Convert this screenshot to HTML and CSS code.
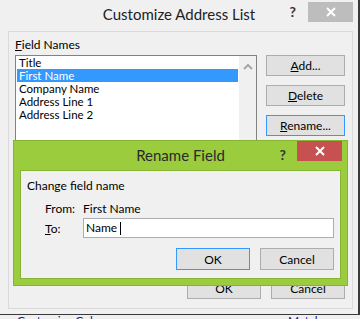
FILE: index.html
```html
<!DOCTYPE html>
<html lang="en">
<head>
  <meta charset="UTF-8">
  <meta name="viewport" content="width=device-width, initial-scale=1.0">
  <title>Customize Address List</title>
  <link rel="stylesheet" href="styles.css">
</head>
<body>
  <div class="window">
    <div class="titlebar">
      <div></div>
      <div class="title">Customize Address List</div>
      <div class="controls">
        <span class="help">?</span>
        <span class="close close-gray">
          <svg width="10" height="10" viewBox="0 0 10 10"><path d="M1 1L9 9M9 1L1 9" stroke="#fff" stroke-width="2"/></svg>
        </span>
      </div>
    </div>

    <div class="panel">
      <div class="label"><u>F</u>ield Names</div>
      <div class="panel-row">
        <div class="listbox">
          <ul class="items">
            <li>Title</li>
            <li class="selected">First Name</li>
            <li>Company Name</li>
            <li>Address Line 1</li>
            <li>Address Line 2</li>
          </ul>
          <div class="scrollbar">
            <svg width="10" height="6" viewBox="0 0 10 6"><path d="M1 5L5 1L9 5" fill="none" stroke="#a6a6a6" stroke-width="2"/></svg>
          </div>
        </div>
        <div class="side-buttons">
          <button class="btn"><u>A</u>dd...</button>
          <button class="btn"><u>D</u>elete</button>
          <button class="btn btn-focus"><u>R</u>ename...</button>
        </div>
      </div>
      <div class="bottom-buttons">
        <button class="btn btn-small">OK</button>
        <button class="btn btn-small">Cancel</button>
      </div>
    </div>

    <div class="rename-dialog">
      <div class="rename-titlebar">
        <div></div>
        <div class="rename-title">Rename Field</div>
        <div class="controls">
          <span class="help help-dark">?</span>
          <span class="close close-red">
            <svg width="10" height="10" viewBox="0 0 10 10"><path d="M1 1L9 9M9 1L1 9" stroke="#fff" stroke-width="2"/></svg>
          </span>
        </div>
      </div>
      <div class="rename-body">
        <div class="rename-heading">Change field name</div>
        <div class="rename-form">
          <span class="form-label">From:</span>
          <span class="form-value">First Name</span>
          <span class="form-label"><u>T</u>o:</span>
          <div class="text-field">Name<span class="caret"></span></div>
        </div>
        <div class="rename-buttons">
          <button class="btn btn-small btn-focus">OK</button>
          <button class="btn btn-small">Cancel</button>
        </div>
      </div>
    </div>
  </div>
  <div class="strip">
    <span>Customize Columns...</span>
    <span class="strip-right">Match...</span>
  </div>
</body>
</html>
```

FILE: styles.css
```css
body {
  margin: 0;
  width: 360px;
  height: 319px;
  overflow: hidden;
  background: #f0f0f0;
  font-family: Lato, 'Liberation Sans', sans-serif;
  font-size: 12px;
  color: #000;
}
.window {
  position: relative;
  width: 358px;
  height: 314px;
  border-right: 2px solid #3a3a3a;
  border-bottom: 1px solid #3a3a3a;
  background: #f0f0f0;
  box-sizing: content-box;
}
.titlebar {
  display: grid;
  grid-template-columns: 1fr auto 1fr;
  height: 31px;
}
.title {
  font-size: 15px;
  color: #222;
  line-height: 28px;
}
.controls {
  display: flex;
  justify-content: flex-end;
  align-items: flex-start;
}
.help {
  font-weight: bold;
  font-size: 14px;
  color: #333;
  margin-top: 3px;
  margin-right: 12px;
}
.close {
  display: flex;
  align-items: center;
  justify-content: center;
  width: 45px;
  height: 20px;
}
.close-gray {
  background: #bdbdbd;
  margin-top: 2px;
  margin-right: 5px;
}
.panel {
  margin-left: 8px;
  width: 345px;
  height: 278px;
  box-sizing: border-box;
  border: 1px solid #dadada;
  padding: 5px 7px 9px 6px;
  display: flex;
  flex-direction: column;
}
.label {
  line-height: 15px;
  margin-bottom: 3px;
}
.panel-row {
  display: flex;
  gap: 9px;
  flex: 1;
}
.listbox {
  width: 242px;
  height: 210px;
  box-sizing: border-box;
  border: 1px solid #828282;
  background: #fff;
  display: flex;
}
.items {
  list-style: none;
  margin: 0;
  padding: 0 1px;
  flex: 1;
  font-size: 11.5px;
}
.items li {
  height: 13px;
  line-height: 13px;
  padding-left: 2px;
}
.items li.selected {
  background: #3399ff;
  color: #fff;
}
.scrollbar {
  width: 17px;
  background: #f0f0f0;
  display: flex;
  justify-content: center;
  padding-top: 8px;
  box-sizing: border-box;
}
.side-buttons {
  display: flex;
  flex-direction: column;
  gap: 9px;
}
.btn {
  width: 79px;
  height: 21px;
  box-sizing: border-box;
  border: 1px solid #adadad;
  background: #e1e1e1;
  font-family: inherit;
  font-size: 12px;
  color: #000;
  padding: 0;
}
.btn-focus {
  border-color: #3399ff;
}
.btn-small {
  width: 74px;
}
.bottom-buttons {
  display: flex;
  justify-content: flex-end;
  gap: 10px;
}
.rename-dialog {
  position: absolute;
  left: 13px;
  top: 140px;
  width: 335px;
  height: 146px;
  box-sizing: border-box;
  background: #9bcc3d;
  border: 1px solid #86b534;
  padding: 0 6px 6px 6px;
  display: flex;
  flex-direction: column;
}
.rename-titlebar {
  display: grid;
  grid-template-columns: 1fr auto 1fr;
  height: 29px;
}
.rename-title {
  font-size: 15px;
  color: #2a2a2a;
  line-height: 28px;
}
.help-dark {
  margin-top: 5px;
  margin-right: 11px;
}
.close-red {
  background: #c75050;
  margin-right: -1px;
}
.rename-body {
  flex: 1;
  background: #f0f0f0;
  border: 1px solid #86b534;
  padding: 7px 6px 0 6px;
}
.rename-heading {
  line-height: 15px;
}
.rename-form {
  display: grid;
  grid-template-columns: 38px 1fr;
  align-items: center;
  row-gap: 2px;
  margin: 8px 0 0 18px;
}
.form-label,
.form-value {
  line-height: 15px;
}
.text-field {
  height: 20px;
  box-sizing: border-box;
  border: 1px solid #abadb3;
  background: #fff;
  padding-left: 2px;
  line-height: 18px;
  display: flex;
  align-items: center;
}
.caret {
  display: inline-block;
  width: 1px;
  height: 13px;
  background: #000;
  margin-left: 3px;
}
.rename-buttons {
  display: flex;
  justify-content: flex-end;
  gap: 10px;
  margin-top: 10px;
}
.rename-buttons .btn {
  height: 22px;
}
.strip {
  height: 4px;
  overflow: hidden;
  display: flex;
  justify-content: space-between;
  padding: 0 30px 0 17px;
  line-height: 12px;
  color: #1a1a80;
}
```
